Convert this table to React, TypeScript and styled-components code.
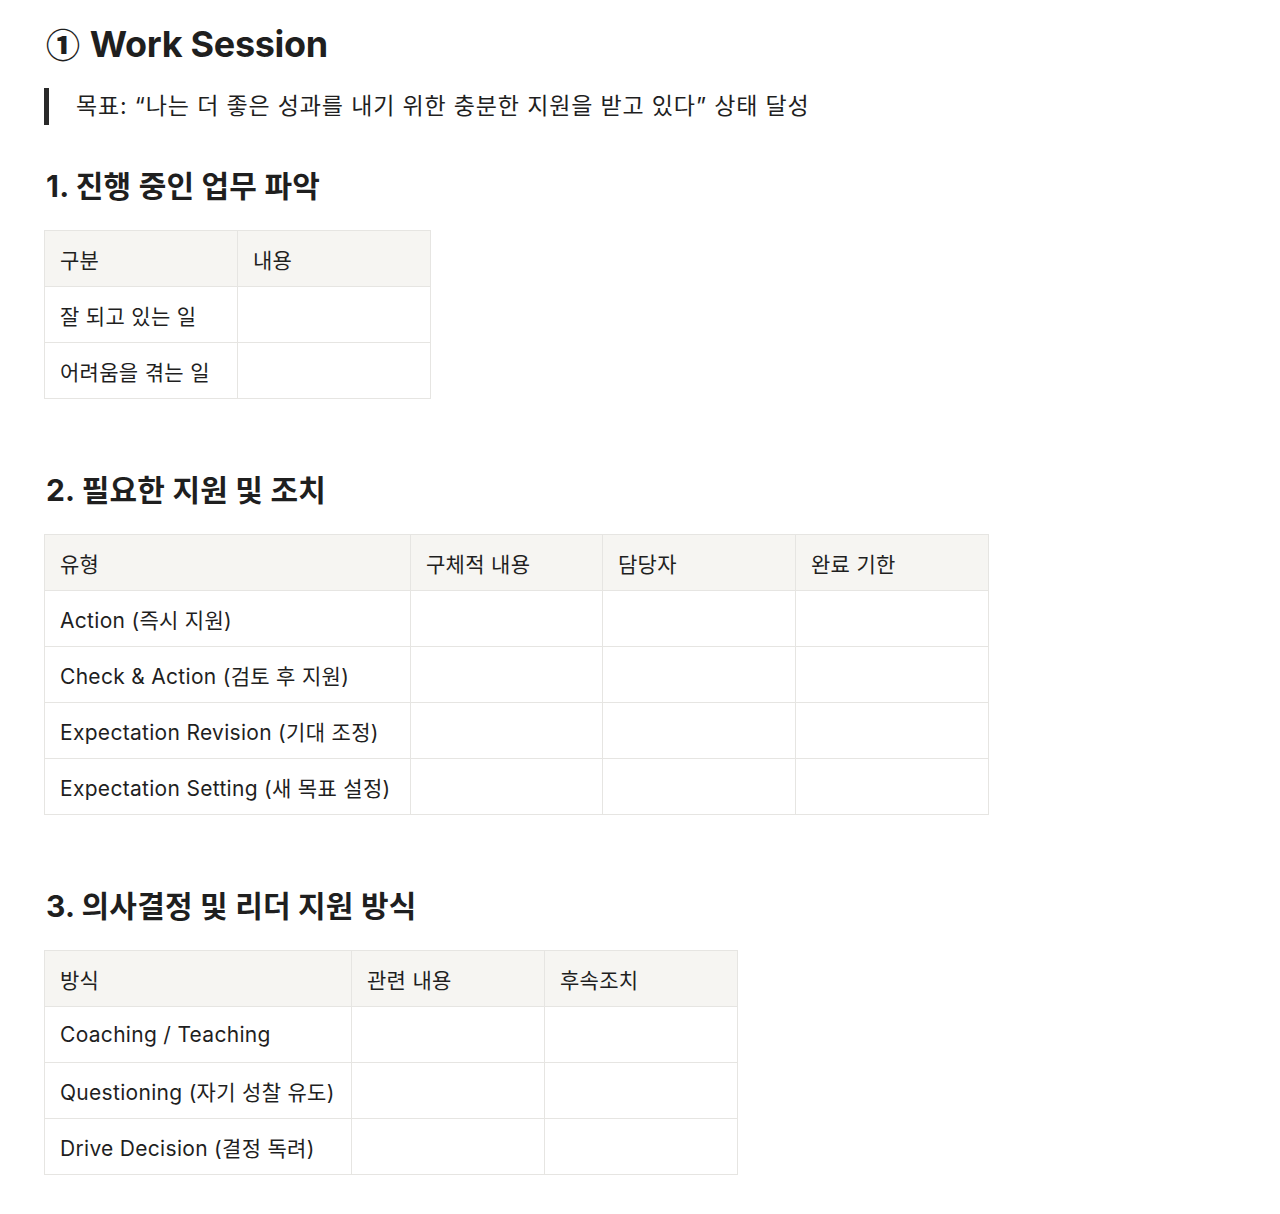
import React from "react";
import styled, { createGlobalStyle } from "styled-components";

const Global = createGlobalStyle`
  html, body { margin: 0; padding: 0; background: #ffffff; }
  body {
    font-family: "Inter", "Noto Sans CJK KR", sans-serif;
    color: #1f1f1f;
  }
`;

const Page = styled.main`
  padding: 20px 44px 40px 44px;
  display: flex;
  flex-direction: column;
  align-items: flex-start;
`;

const Title = styled.h1`
  margin: 0 0 0 2px;
  font-size: 36px;
  line-height: 48px;
  font-weight: 700;
  letter-spacing: -0.3px;
  color: #1f1f1f;
  display: flex;
  align-items: center;
  gap: 10px;
`;

const Num = styled.span`
  font-family: "Noto Sans CJK KR", sans-serif;
  font-size: 34px;
  font-weight: 900;
  line-height: 1;
`;

const Quote = styled.blockquote`
  margin: 20px 0 0 0;
  padding: 2px 0 2px 27px;
  border-left: 5px solid #2a2a2a;
  font-size: 23px;
  line-height: 33px;
  letter-spacing: 0.85px;
  color: #1f1f1f;
`;

const Heading = styled.h2<{ $top: number }>`
  margin: ${(p) => p.$top}px 0 0 2px;
  font-size: 30px;
  line-height: 40px;
  font-weight: 700;
  letter-spacing: 0.2px;
  color: #1f1f1f;
`;

const Table = styled.table`
  margin-top: 24px;
  border-collapse: collapse;
  table-layout: fixed;
  font-size: 21px;
  letter-spacing: 0.3px;
`;

const Th = styled.th<{ $w: number }>`
  width: ${(p) => p.$w}px;
  height: 56px;
  box-sizing: border-box;
  padding: 0 15px;
  background: #f6f5f2;
  border: 1px solid #e6e5e2;
  text-align: left;
  font-weight: 400;
  color: #1f1f1f;
`;

const Td = styled.td`
  height: 56px;
  box-sizing: border-box;
  padding: 0 15px;
  border: 1px solid #e6e5e2;
  color: #1f1f1f;
  white-space: nowrap;
`;

type Spec = { cols: { label: string; w: number }[]; rows: string[] };

const DataTable = ({ cols, rows }: Spec) => (
  <Table>
    <thead>
      <tr>
        {cols.map((c) => (
          <Th key={c.label} $w={c.w}>
            {c.label}
          </Th>
        ))}
      </tr>
    </thead>
    <tbody>
      {rows.map((r) => (
        <tr key={r}>
          <Td>{r}</Td>
          {cols.slice(1).map((c) => (
            <Td key={c.label} />
          ))}
        </tr>
      ))}
    </tbody>
  </Table>
);

export default function App() {
  return (
    <>
      <Global />
      <Page>
        <Title>
          <Num>①</Num>
          <span>Work Session</span>
        </Title>
        <Quote>목표: “나는 더 좋은 성과를 내기 위한 충분한 지원을 받고 있다” 상태 달성</Quote>

        <Heading $top={41}>1. 진행 중인 업무 파악</Heading>
        <DataTable
          cols={[
            { label: "구분", w: 193 },
            { label: "내용", w: 193 },
          ]}
          rows={["잘 되고 있는 일", "어려움을 겪는 일"]}
        />

        <Heading $top={71}>2. 필요한 지원 및 조치</Heading>
        <DataTable
          cols={[
            { label: "유형", w: 366 },
            { label: "구체적 내용", w: 192 },
            { label: "담당자", w: 193 },
            { label: "완료 기한", w: 193 },
          ]}
          rows={[
            "Action (즉시 지원)",
            "Check & Action (검토 후 지원)",
            "Expectation Revision (기대 조정)",
            "Expectation Setting (새 목표 설정)",
          ]}
        />

        <Heading $top={71}>3. 의사결정 및 리더 지원 방식</Heading>
        <DataTable
          cols={[
            { label: "방식", w: 307 },
            { label: "관련 내용", w: 193 },
            { label: "후속조치", w: 193 },
          ]}
          rows={["Coaching / Teaching", "Questioning (자기 성찰 유도)", "Drive Decision (결정 독려)"]}
        />
      </Page>
    </>
  );
}
